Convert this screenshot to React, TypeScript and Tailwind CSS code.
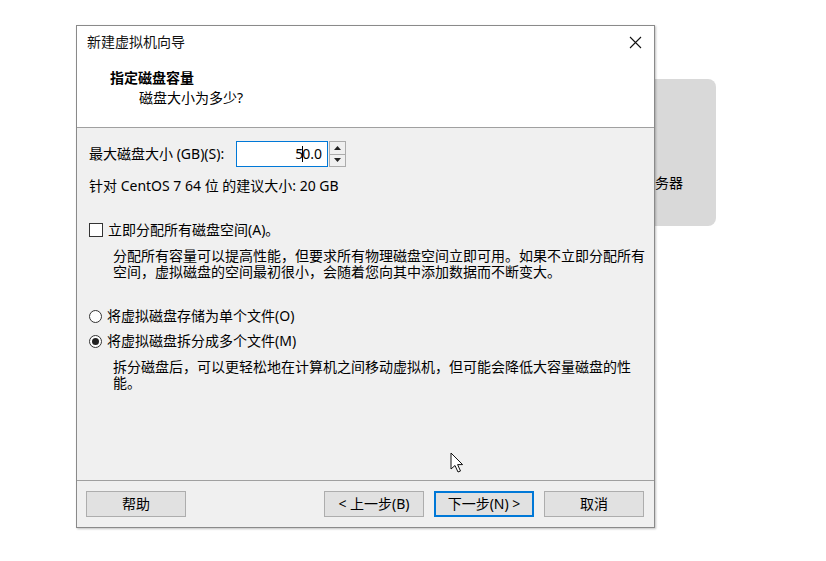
import React from "react";

// New VM wizard — disk capacity step, floating over a grey panel

const FONT = "font-['Noto_Sans','Noto_Sans_CJK_SC','Microsoft_YaHei',sans-serif]";

function Radio({ checked }: { checked?: boolean }) {
  return (
    <span className="flex h-[13px] w-[13px] items-center justify-center rounded-full border border-[#333] bg-white">
      {checked && <span className="h-[7px] w-[7px] rounded-full bg-[#222]" />}
    </span>
  );
}

function WinButton({ label, primary }: { label: string; primary?: boolean }) {
  return (
    <button
      className={
        primary
          ? "flex h-[26px] w-[100px] items-center justify-center border-2 border-[#0078d7] bg-[#e1e1e1] text-[14px] leading-4 text-black"
          : "flex h-[26px] w-[100px] items-center justify-center border border-[#adadad] bg-[#e1e1e1] text-[14px] leading-4 text-black"
      }
    >
      {label}
    </button>
  );
}

export default function App() {
  return (
    <div className={`relative h-[561px] w-[826px] overflow-hidden bg-white ${FONT}`}>
      {/* app content behind the dialog */}
      <div className="absolute left-[600px] top-[79px] h-[147px] w-[116px] rounded-lg bg-[#d9d9d9] pl-[41px] pt-[96px] text-[14px] leading-4 text-black">
        服务器
      </div>

      {/* dialog window */}
      <div className="absolute left-[76px] top-[25px] flex h-[503px] w-[579px] flex-col border border-[#8a8a8a] bg-[#f0f0f0] shadow-[1px_1px_2px_rgba(0,0,0,0.25)]">
        {/* header */}
        <div className="h-[102px] border-b border-[#a0a0a0] bg-white">
          <div className="flex items-center justify-between pl-[10px] pr-[12px] pt-[8px]">
            <span className="text-[14px] leading-4 text-[#111]">新建虚拟机向导</span>
            <svg width="13" height="13" viewBox="0 0 13 13">
              <path d="M1 1L12 12M12 1L1 12" stroke="#111" strokeWidth="1.1" fill="none" />
            </svg>
          </div>
          <div className="mt-5 pl-[33px] text-[14px] font-bold leading-4 text-black">指定磁盘容量</div>
          <div className="mt-1 pl-[62px] text-[14px] leading-4 text-black">磁盘大小为多少?</div>
        </div>

        {/* body */}
        <div className="flex flex-1 flex-col pl-[12px] pt-[13px] text-[14px] leading-4 text-black">
          <div className="flex items-center">
            <span className="w-[147px]">最大磁盘大小 (GB)(S):</span>
            <div className="flex h-[26px] w-[92px] items-center justify-end border border-[#0078d7] bg-white pr-[5px]">
              <span>5</span>
              <span className="mx-[-1px] h-[16px] w-[1px] bg-black" />
              <span>0.0</span>
            </div>
            <div className="ml-px flex h-[26px] w-[17px] flex-col border border-[#acacac] bg-[#f0f0f0]">
              <div className="flex flex-1 items-center justify-center border-b border-[#acacac]">
                <svg width="7" height="4" viewBox="0 0 7 4">
                  <path d="M0 4L3.5 0L7 4Z" fill="#222" />
                </svg>
              </div>
              <div className="flex flex-1 items-center justify-center">
                <svg width="7" height="4" viewBox="0 0 7 4">
                  <path d="M0 0L3.5 4L7 0Z" fill="#222" />
                </svg>
              </div>
            </div>
          </div>

          <div className="mt-[11px]">针对 CentOS 7 64 位 的建议大小: 20 GB</div>

          <div className="mt-[28px] flex items-center gap-[5px]">
            <span className="h-[14px] w-[14px] border border-[#333] bg-white" />
            <span>立即分配所有磁盘空间(A)。</span>
          </div>
          <p className="ml-[24px] mt-[10px] w-[538px]">
            分配所有容量可以提高性能，但要求所有物理磁盘空间立即可用。如果不立即分配所有空间，虚拟磁盘的空间最初很小，会随着您向其中添加数据而不断变大。
          </p>

          <div className="mt-[28px] flex items-center gap-[5px]">
            <Radio />
            <span>将虚拟磁盘存储为单个文件(O)</span>
          </div>
          <div className="mt-[9px] flex items-center gap-[5px]">
            <Radio checked />
            <span>将虚拟磁盘拆分成多个文件(M)</span>
          </div>
          <p className="ml-[24px] mt-[10px] w-[538px]">
            拆分磁盘后，可以更轻松地在计算机之间移动虚拟机，但可能会降低大容量磁盘的性能。
          </p>
        </div>

        {/* footer */}
        <div className="flex h-[47px] items-start justify-between border-t border-[#a0a0a0] pl-[9px] pr-[10px] pt-[10px]">
          <WinButton label="帮助" />
          <div className="flex gap-[10px]">
            <WinButton label="< 上一步(B)" />
            <WinButton label="下一步(N) >" primary />
            <WinButton label="取消" />
          </div>
        </div>
      </div>

      {/* mouse pointer */}
      <svg className="absolute left-[450px] top-[452px]" width="14" height="22" viewBox="0 0 14 22">
        <path
          d="M1 1L1 17L5 13.5L8 20L10.5 19L7.6 12.6L12.6 12.6Z"
          fill="#fff"
          stroke="#111"
          strokeWidth="1"
          strokeLinejoin="round"
        />
      </svg>
    </div>
  );
}
